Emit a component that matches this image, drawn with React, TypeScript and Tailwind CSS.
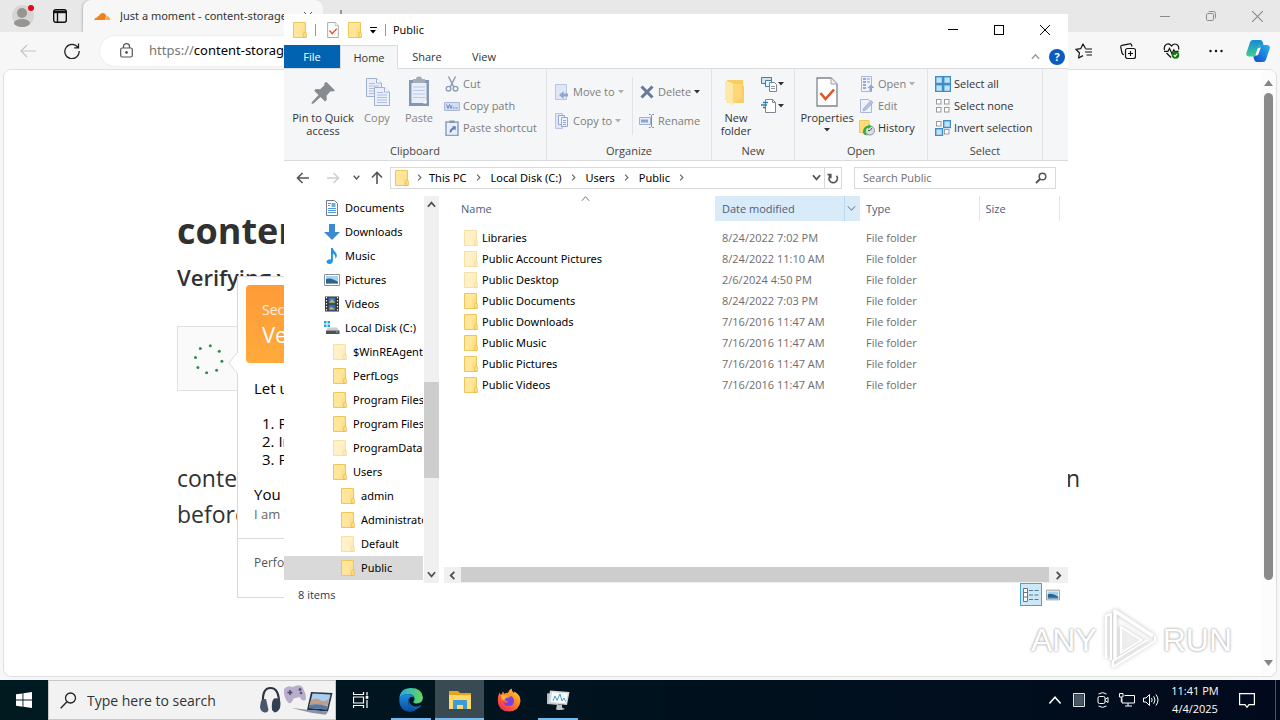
import React from "react";
import type { ReactNode } from "react";

type IconProps = { className?: string };

/* ---------- shared glyphs ---------- */

function Folder({ pale = false, className = "h-4 w-[14px]" }: { pale?: boolean; className?: string }) {
  return (
    <svg viewBox="0 0 14 16" className={`shrink-0 ${className}`} opacity={pale ? 0.55 : 1} aria-hidden="true">
      <path d="M.5.500h12v15H.5z" fill="#ffe08a" stroke="#eec75c" />
      <path d="M1 1h10v3L8 7v8H1z" fill="#ffe9a6" opacity=".6" />
      <path d="M10.800 15.500v-4.200q0-1.300 1.200-1.300t1.300 1.300v4.200z" fill="#ffe38f" stroke="#e9b83d" strokeWidth=".8" />
    </svg>
  );
}

function Chevron({ dir, className = "size-2", width = 2 }: { dir: "up" | "down" | "left" | "right"; className?: string; width?: number }) {
  const d = {
    up: "M1 7.500 5 3l4 4.500",
    down: "M1 2.500 5 7l4-4.500",
    left: "M7 1 3 5l4 4",
    right: "M3 1l4 4-4 4",
  }[dir];
  return (
    <svg viewBox="0 0 10 10" className={`shrink-0 ${className}`} fill="none" stroke="currentColor" strokeWidth={width} aria-hidden="true">
      <path d={d} />
    </svg>
  );
}

function Caret({ className = "" }: IconProps) {
  return (
    <svg viewBox="0 0 6 4" className={`h-1 w-1.5 shrink-0 ${className}`} aria-hidden="true">
      <path d="M0 0h6L3 3.500z" fill="currentColor" />
    </svg>
  );
}

function CheckPage({ className = "" }: IconProps) {
  return (
    <svg viewBox="0 0 22 30" className={`shrink-0 ${className}`} aria-hidden="true">
      <path d="M1 1h14l6 6v22H1z" fill="#fff" stroke="#7d8590" strokeWidth="1.300" />
      <path d="M15 1v6h6" fill="#eef0f3" stroke="#9aa2ad" />
      <path d="m4.500 16 5 6L18 12.500" fill="none" stroke="#e0562b" strokeWidth="2.600" />
    </svg>
  );
}

/* ---------- ribbon icons ---------- */

const PinIcon = () => (
  <svg viewBox="0 0 32 32" className="size-8" aria-hidden="true">
    <path d="M21.500 6 30 14.500l-2 1-2.500-.3-4 4.500.3 4.300-1.800 1.500-4.500-4.500-7 6.500-2 .5.500-2 6.500-7-4.300-4.300 1.600-1.800 4.400.3 4.300-4.200-.2-2z" transform="translate(-2 0)" fill="#848c92" />
  </svg>
);

const CopyIcon = () => (
  <svg viewBox="0 0 32 32" className="size-8" aria-hidden="true">
    {[
      [5, 2],
      [13, 11],
    ].map(([x, y]) => (
      <g key={x} transform={`translate(${x} ${y})`}>
        <path d="M.5.500h10l5 4.500v13.500H.5z" fill="#eaf0fb" stroke="#9fb0d2" />
        <path d="M10.500.5V5h5" fill="#fff" stroke="#9fb0d2" />
        <path d="M3 5.500h6M3 8h10M3 10.500h10M3 13h10M3 15.500h10" stroke="#aebde0" />
      </g>
    ))}
  </svg>
);

const PasteIcon = () => (
  <svg viewBox="0 0 32 32" className="size-8" aria-hidden="true">
    <path d="M6 4h20v26H6z" fill="#8496b5" />
    <path d="M8.500 7h15v20h-15z" fill="#e9effa" />
    <path d="M10 11h12M10 14.500h12M10 18h12M10 21.500h12" stroke="#b9c8e6" />
    <path d="M10 3h3q0-2.500 3-2.500T19 3h3v4H10z" fill="#a3acb8" />
    <path d="M20 27.500 23.500 24v3.500z" fill="#fff" />
  </svg>
);

const CutIcon = () => (
  <svg viewBox="0 0 16 16" className="size-4" fill="none" stroke="#8d9db6" aria-hidden="true">
    <path d="M4.500.5 9.800 11M11.500.5 6.200 11" strokeWidth="1.500" />
    <circle cx="4.500" cy="12.700" r="2.300" strokeWidth="1.400" />
    <circle cx="11.500" cy="12.700" r="2.300" strokeWidth="1.400" />
  </svg>
);

const CopyPathIcon = () => (
  <svg viewBox="0 0 16 16" className="size-4" aria-hidden="true">
    <path d="M.5 4.500h15v8H.5z" fill="#d2dcf2" stroke="#a9b8d8" />
    <path d="m2.500 6.500 1.500 4 1.500-4 1.500 4 1-3M9 10h1.500M11.500 10h2" fill="none" stroke="#6f87ba" />
  </svg>
);

const PasteShortcutIcon = () => (
  <svg viewBox="0 0 16 16" className="size-4" aria-hidden="true">
    <path d="M2 2h12v13.500H2z" fill="#e8effa" stroke="#8b9fc4" strokeWidth="1.500" />
    <path d="M5.500.5h5V3h-5z" fill="#8795aa" />
    <path d="M5.500 12.500q0-4 3-4.500V6l3.500.5-.5 4-1.200-1.200q-2.500.5-3 3.200z" fill="#5f7fbd" />
  </svg>
);

const MoveIcon = () => (
  <svg viewBox="0 0 16 16" className="size-4" aria-hidden="true">
    <path d="M1.500.500h11v15h-11z" fill="#dfe6f6" stroke="#b7c4e2" />
    <path d="M14 9.500v3H9.500V15L5 11l4.500-4v2.500z" fill="#92a6cf" />
  </svg>
);

const CopyToIcon = () => (
  <svg viewBox="0 0 16 16" className="size-4" aria-hidden="true">
    <path d="M1.500.500h7v15h-7z" fill="#dfe6f6" stroke="#b7c4e2" />
    <path d="M4.500 2.500h6v9h-6z" fill="#eef3fc" stroke="#94a7cf" />
    <path d="M7.500 4.500h6v9h-6z" fill="#eef3fc" stroke="#94a7cf" />
    <path d="M9 7.500h3M9 9.500h3M9 11.500h3" stroke="#94a7cf" />
  </svg>
);

const DeleteIcon = () => (
  <svg viewBox="0 0 16 16" className="size-4" aria-hidden="true">
    <path d="M2.500 2.500 13.500 13.500M13.500 2.500 2.500 13.500" stroke="#66799b" strokeWidth="3" fill="none" />
  </svg>
);

const RenameIcon = () => (
  <svg viewBox="0 0 16 16" className="size-4" fill="none" aria-hidden="true">
    <path d="M.5 4.500h11v7H.5z" fill="#e6edfa" stroke="#9fb1d6" />
    <path d="M2 6.500h7v3H2z" fill="#8ba3d4" />
    <path d="M10 1.500h1.500l1 1 1-1H15M12.500 2.500v11M10 14.500h1.500l1-1 1 1H15" stroke="#7f8da5" />
  </svg>
);

const BigFolderIcon = () => (
  <svg viewBox="0 0 32 32" className="size-8" aria-hidden="true">
    <path d="M7 4h16v5l1 1v17H7z" fill="#f8ce63" />
    <path d="M5 4.500l8 3V30l-8-6z" fill="#ffe9a8" />
    <path d="M13 8h9v14l-9 6z" fill="#ffdc80" opacity=".7" />
  </svg>
);

const NewItemIcon = () => (
  <svg viewBox="0 0 16 16" className="size-4" aria-hidden="true">
    <path d="M.5 1.500h10v6H.5z" fill="#cfe5f3" stroke="#3f7fa3" />
    <path d="M4.500 4.500h6v6h-6z" fill="#e9f3fa" stroke="#3f7fa3" />
    <path d="M8.500 6.500h5l2 2v7h-7z" fill="#fff" stroke="#7c8792" />
    <path d="M10 10.500h4M10 12.500h4" stroke="#8f99a3" />
  </svg>
);

const EasyAccessIcon = () => (
  <svg viewBox="0 0 16 16" className="size-4" aria-hidden="true">
    <path d="M4.500 1.500h7l3 3v10h-10z" fill="#fff" stroke="#7c8792" />
    <path d="M11.500 1.500v3h3" fill="none" stroke="#7c8792" />
    <path d="M2 4.500h5M0 7h6M2 9.500h3" stroke="#2f7fb5" strokeWidth="1.300" />
  </svg>
);

const OpenIcon = () => (
  <svg viewBox="0 0 16 16" className="size-4" aria-hidden="true">
    <path d="M2.500.500h10v15h-10z" fill="#eef2fb" stroke="#a9b8d8" />
    <path d="M4 3h3M4 6h3M4 9h3M4 12h3" stroke="#7f93bd" strokeWidth="1.600" />
    <path d="M8 3h3M8 6h3" stroke="#a9b8d8" strokeWidth="1.400" />
    <path d="M12 8.500 15.500 12H13v3.500h-2.500V12H8.500z" fill="#93a5cc" />
  </svg>
);

const EditIcon = () => (
  <svg viewBox="0 0 16 16" className="size-4" aria-hidden="true">
    <path d="M1.500 1.500h8l3 3v10h-11z" fill="#eef2fb" stroke="#a9b8d8" />
    <path d="m4 13 .8-3L12 2.500l2 2L6.800 12z" fill="#b5c3e0" stroke="#93a5cc" strokeWidth=".7" />
  </svg>
);

const HistoryIcon = () => (
  <svg viewBox="0 0 16 16" className="size-4" aria-hidden="true">
    <path d="M.5.500h9.500v12H.5z" fill="#ffdd77" stroke="#eec75c" />
    <circle cx="11" cy="10.500" r="4.500" fill="#d9dee2" stroke="#8f979e" />
    <path d="M11 10.500 13 8M11 10.500H9" stroke="#555" />
    <path d="M4 12q0-6 6-6.500l-.5-1.500 3 2.500-3.500 2.500v-1.500Q6 8.500 6.500 13q1 1.500 3 2Q4.500 16 4 12z" fill="#37a845" />
  </svg>
);

function SelectIcon({ filled }: { filled: boolean[] }) {
  return (
    <svg viewBox="0 0 16 16" className="size-4" aria-hidden="true">
      {filled.map((on, i) => {
        const x = (i % 2) * 8;
        const y = Math.floor(i / 2) * 8;
        return on ? (
          <rect key={i} x={x + 0.7} y={y + 0.7} width="6.800" height="6.800" fill="#bfe0f8" stroke="#3c8ec9" strokeWidth="1.400" />
        ) : (
          <rect key={i} x={x + 1.5} y={y + 1.5} width="4.500" height="4.500" fill="#fff" stroke="#9a9a9a" />
        );
      })}
    </svg>
  );
}

/* ---------- ribbon parts ---------- */

function Group({ label, className, children }: { label: string; className: string; children: ReactNode }) {
  return (
    <section className={`flex shrink-0 flex-col border-r border-[#e2e3e4] ${className}`}>
      <div className="flex h-[73px]">{children}</div>
      <h2 className="text-center leading-[18px] text-[#444]">{label}</h2>
    </section>
  );
}

function BigButton({ icon, label, dim, className, children }: { icon: ReactNode; label: string; dim?: boolean; className: string; children?: ReactNode }) {
  return (
    <button className={`flex shrink-0 flex-col items-center pt-[7px] ${dim ? "text-[#858585]" : "text-[#333]"} ${className}`}>
      {icon}
      <span className="mt-[3px] leading-[13px]">{label}</span>
      {children}
    </button>
  );
}

function SmallButton({ icon, label, dim, tall, caret }: { icon: ReactNode; label: string; dim?: boolean; tall?: boolean; caret?: "dim" | "dark" }) {
  return (
    <button className={`flex items-center gap-[3px] whitespace-nowrap ${tall ? "h-[29px]" : "h-[22px]"} ${dim ? "text-[#7d7d7d]" : "text-[#333]"}`}>
      {icon}
      <span>{label}</span>
      {caret && <Caret className={caret === "dim" ? "text-[#b0b0b0]" : "text-[#333]"} />}
    </button>
  );
}

function Ribbon() {
  return (
    <div className="flex h-[92px] border-b border-[#dadbdc] bg-[#f5f6f7]">
      <Group label="Clipboard" className="w-[263px]">
        <BigButton icon={<PinIcon />} label="Pin to Quick access" className="ml-1 w-[70px]" />
        <BigButton icon={<CopyIcon />} label="Copy" dim className="w-[38px]" />
        <BigButton icon={<PasteIcon />} label="Paste" dim className="w-[46px]" />
        <div className="ml-0.5 flex flex-col pt-1">
          <SmallButton icon={<CutIcon />} label="Cut" dim />
          <SmallButton icon={<CopyPathIcon />} label="Copy path" dim />
          <SmallButton icon={<PasteShortcutIcon />} label="Paste shortcut" dim />
        </div>
      </Group>
      <Group label="Organize" className="w-[165px]">
        <div className="mt-2 ml-[7px] flex h-[58px] w-[79px] flex-col border-r border-[#e2e3e4]">
          <SmallButton icon={<MoveIcon />} label="Move to" dim tall caret="dim" />
          <SmallButton icon={<CopyToIcon />} label="Copy to" dim tall caret="dim" />
        </div>
        <div className="mt-2 ml-1.5 flex flex-col">
          <SmallButton icon={<DeleteIcon />} label="Delete" dim tall caret="dark" />
          <SmallButton icon={<RenameIcon />} label="Rename" dim tall />
        </div>
      </Group>
      <Group label="New" className="w-[83px]">
        <BigButton icon={<BigFolderIcon />} label="New folder" className="w-12" />
        <div className="ml-px flex flex-col pt-1">
          <button aria-label="New item" className="flex h-[22px] items-center gap-px text-[#333]"><NewItemIcon /><Caret /></button>
          <button aria-label="Easy access" className="flex h-[22px] items-center gap-px text-[#333]"><EasyAccessIcon /><Caret /></button>
        </div>
      </Group>
      <Group label="Open" className="w-[133px]">
        <BigButton icon={<CheckPage className="h-8 w-[22px]" />} label="Properties" className="w-16">
          <Caret className="mt-1 text-[#333]" />
        </BigButton>
        <div className="flex flex-col pt-1">
          <SmallButton icon={<OpenIcon />} label="Open" dim caret="dim" />
          <SmallButton icon={<EditIcon />} label="Edit" dim />
          <SmallButton icon={<HistoryIcon />} label="History" />
        </div>
      </Group>
      <Group label="Select" className="w-[115px]">
        <div className="ml-[7px] flex flex-col pt-1">
          <SmallButton icon={<SelectIcon filled={[true, true, true, true]} />} label="Select all" />
          <SmallButton icon={<SelectIcon filled={[false, false, false, false]} />} label="Select none" />
          <SmallButton icon={<SelectIcon filled={[false, true, true, false]} />} label="Invert selection" />
        </div>
      </Group>
    </div>
  );
}

/* ---------- navigation tree ---------- */

const DocumentsIcon = () => (
  <svg viewBox="0 0 16 16" className="size-4" aria-hidden="true">
    <path d="M2.500.500h8l3 3v12h-11z" fill="#fff" stroke="#6e7b88" />
    <path d="M4 3.500h3M4 5.500h2M4 8.500h8M4 10.500h8M4 12.500h8" stroke="#4d9ad6" />
    <path d="M7.500 3h4v4h-4z" fill="#69afe0" />
  </svg>
);
const DownloadsIcon = () => (
  <svg viewBox="0 0 16 16" className="size-4" aria-hidden="true">
    <path d="M5 0h6v8h5l-8 8-8-8h5z" fill="#3b8bd4" />
  </svg>
);
const MusicIcon = () => (
  <svg viewBox="0 0 16 16" className="size-4" aria-hidden="true">
    <path d="M7 0h1.800q.4 2.500 2.400 4t1.500 4.500q-.4 1.500-1.500 2 .7-3.500-2.300-5v7.300q-.2 2.900-3.400 3.200-3-.2-3-2.200.3-2.700 4.500-2.600z" fill="#1e95e6" />
  </svg>
);
const PicturesIcon = ({ className = "h-4 w-4" }: IconProps) => (
  <svg viewBox="0 0 16 16" className={className} aria-hidden="true">
    <path d="M.5 2.500h15v11H.5z" fill="#fff" stroke="#8a9299" />
    <path d="M2 4h12v8H2z" fill="#a6d2f0" />
    <path d="M2 7q5-2 12 3v2H2z" fill="#2f6288" />
    <path d="M2 11h12v1H2z" fill="#6fa6bb" />
  </svg>
);
const VideosIcon = () => (
  <svg viewBox="0 0 16 16" className="size-4" aria-hidden="true">
    <path d="M1 .5h14v15H1z" fill="#2d2f33" />
    <path d="M2.500 1v15M13.500 1v15" stroke="#e8e8e8" strokeWidth="1.300" strokeDasharray="1.500 1.500" />
    <path d="M4.500 1.500h7v6h-7z" fill="#3977b8" />
    <path d="M4.500 8.500h7v6h-7z" fill="#3d6da6" />
    <path d="M5 6.500 8 3l3 4zM5 13.500l2-3 4 3z" fill="#c8b34e" />
  </svg>
);
const DiskIcon = () => (
  <svg viewBox="0 0 16 16" className="size-4" aria-hidden="true">
    <path d="M0 1h2.500v2.500H0zM3.500 1H6v2.500H3.500zM0 4.500h2.500V7H0zM3.500 4.500H6V7H3.500z" fill="#1fa5e2" />
    <path d="M4 7.500h9l2 3H2.500z" fill="#c9ced2" />
    <path d="M2 10.500h13.500V14H2z" fill="#4e5357" />
    <path d="M12 12h2" stroke="#5bd36a" />
  </svg>
);

const tree: { name: string; icon: ReactNode; level: 0 | 1 | 2 }[] = [
  { name: "Documents", icon: <DocumentsIcon />, level: 0 },
  { name: "Downloads", icon: <DownloadsIcon />, level: 0 },
  { name: "Music", icon: <MusicIcon />, level: 0 },
  { name: "Pictures", icon: <PicturesIcon />, level: 0 },
  { name: "Videos", icon: <VideosIcon />, level: 0 },
  { name: "Local Disk (C:)", icon: <DiskIcon />, level: 0 },
  { name: "$WinREAgent", icon: <Folder pale />, level: 1 },
  { name: "PerfLogs", icon: <Folder />, level: 1 },
  { name: "Program Files", icon: <Folder />, level: 1 },
  { name: "Program Files (x86)", icon: <Folder />, level: 1 },
  { name: "ProgramData", icon: <Folder pale />, level: 1 },
  { name: "Users", icon: <Folder />, level: 1 },
  { name: "admin", icon: <Folder />, level: 2 },
  { name: "Administrator", icon: <Folder />, level: 2 },
  { name: "Default", icon: <Folder pale />, level: 2 },
  { name: "Public", icon: <Folder />, level: 2 },
];

const indent = { 0: "pl-10", 1: "pl-12", 2: "pl-14" };

function NavigationPane() {
  return (
    <nav aria-label="Folders" className="flex w-[156px] shrink-0">
      <ul className="w-[139px] overflow-hidden font-['Noto_Sans','Open_Sans',sans-serif]">
        {tree.map((item) => (
          <li key={item.name}>
            <a href="#" className={`flex h-6 items-center gap-[5px] whitespace-nowrap text-black ${indent[item.level]} ${item.name === "Public" ? "bg-[#d9d9d9]" : ""}`}>
              <span className="flex w-4 shrink-0 justify-center">{item.icon}</span>
              {item.name}
            </a>
          </li>
        ))}
      </ul>
      <div className="ml-px flex w-[15px] flex-col bg-[#f0f0f0] text-[#505050]">
        <button aria-label="Scroll up" className="flex h-[17px] items-center justify-center"><Chevron dir="up" className="size-[9px]" /></button>
        <div className="mt-[169px] h-24 bg-[#cdcdcd]" />
        <button aria-label="Scroll down" className="mt-auto flex h-[17px] items-center justify-center"><Chevron dir="down" className="size-[9px]" /></button>
      </div>
    </nav>
  );
}

/* ---------- file list ---------- */

const files = [
  { name: "Libraries", date: "8/24/2022 7:02 PM", pale: true },
  { name: "Public Account Pictures", date: "8/24/2022 11:10 AM", pale: true },
  { name: "Public Desktop", date: "2/6/2024 4:50 PM", pale: true },
  { name: "Public Documents", date: "8/24/2022 7:03 PM", pale: false },
  { name: "Public Downloads", date: "7/16/2016 11:47 AM", pale: false },
  { name: "Public Music", date: "7/16/2016 11:47 AM", pale: false },
  { name: "Public Pictures", date: "7/16/2016 11:47 AM", pale: false },
  { name: "Public Videos", date: "7/16/2016 11:47 AM", pale: false },
];

function FileList() {
  return (
    <div className="ml-1 flex min-w-0 flex-1 flex-col">
      <table className="ml-[11px] w-[604px] table-fixed border-collapse text-left">
        <colgroup>
          <col className="w-[260px]" />
          <col className="w-[145px]" />
          <col className="w-[119px]" />
          <col className="w-20" />
        </colgroup>
        <thead className="text-[#4c607a]">
          <tr className="h-[25px]">
            <th className="relative p-0 pl-1.5 font-normal">
              Name
              <Chevron dir="up" width={1} className="absolute -top-0.5 left-[126px] size-[9px] text-[#666]" />
            </th>
            <th className="bg-[#d9ebf9] p-0 font-normal">
              <div className="flex h-[25px] items-center pl-[7px]">
                <span className="flex-1">Date modified</span>
                <button aria-label="Filter dates" className="flex h-full w-4 items-center justify-center border-l border-[#b9d9ee] pr-0.5">
                  <Chevron dir="down" width={1} className="size-[9px]" />
                </button>
              </div>
            </th>
            <th className="border-r border-[#e5e5e5] p-0 pl-1.5 font-normal">Type</th>
            <th className="border-r border-[#e5e5e5] p-0 pl-1.5 font-normal">Size</th>
          </tr>
        </thead>
        <tbody className="text-[#6d6d6d] before:block before:h-1.5">
          {files.map((f) => (
            <tr key={f.name} className="h-[21px]">
              <td className="p-0">
                <div className="flex h-[21px] items-center gap-1 pl-[9px] font-['Noto_Sans','Open_Sans',sans-serif] text-black">
                  <Folder pale={f.pale} />
                  {f.name}
                </div>
              </td>
              <td className="p-0 pl-[7px]">{f.date}</td>
              <td className="p-0 pl-1.5">File folder</td>
              <td className="p-0" />
            </tr>
          ))}
        </tbody>
      </table>
      <div className="mt-auto flex h-4 bg-[#f0f0f0] text-[#505050]">
        <button aria-label="Scroll left" className="flex w-[17px] items-center justify-center"><Chevron dir="left" className="size-[9px]" /></button>
        <div className="mb-px flex-1 bg-[#cdcdcd]" />
        <button aria-label="Scroll right" className="flex w-[19px] items-center justify-center"><Chevron dir="right" className="size-[9px]" /></button>
      </div>
    </div>
  );
}

/* ---------- explorer window ---------- */

function ArrowIcon({ turn = "" }: { turn?: string }) {
  return (
    <svg viewBox="0 0 14 14" className={`size-[14px] ${turn}`} fill="none" stroke="currentColor" strokeWidth="1.600" aria-hidden="true">
      <path d="M1.500 7H13M6.500 2l-5 5 5 5" />
    </svg>
  );
}

function ExplorerWindow() {
  const crumbs = ["This PC", "Local Disk (C:)", "Users", "Public"];
  return (
    <section aria-label="Public" className="absolute top-[14px] left-[284px] flex w-[784px] flex-col bg-white text-[11px] leading-4">
      <header className="flex h-[31px] items-center">
        <Folder className="ml-[9px] h-4 w-[14px]" />
        <span className="ml-2 h-3 w-px bg-[#999]" />
        <CheckPage className="ml-[11px] h-4 w-3" />
        <Folder className="ml-[9px] h-4 w-[14px]" />
        <button aria-label="Customize" className="ml-[7px] flex w-2 flex-col items-center gap-0.5 pt-0.5">
          <span className="h-px w-[7px] bg-black" />
          <Caret />
        </button>
        <span className="ml-2 h-3 w-px bg-[#999]" />
        <span className="ml-[7px] text-black">Public</span>
        <div className="ml-auto flex h-full">
          <button aria-label="Minimize" className="flex w-[46px] items-center justify-center"><span className="h-px w-[10px] bg-black" /></button>
          <button aria-label="Maximize" className="flex w-[45px] items-center justify-center"><span className="size-[10px] border border-black" /></button>
          <button aria-label="Close" className="flex w-[47px] items-center justify-center">
            <svg viewBox="0 0 10 10" className="size-[10px]" stroke="#000" aria-hidden="true"><path d="m0 0 10 10M10 0 0 10" /></svg>
          </button>
        </div>
      </header>
      <div className="flex h-6 border-b border-[#dadbdc] text-[#333]">
        <button className="w-14 bg-[#0063b1] text-white">File</button>
        <button className="-mb-px w-[58px] border border-b-0 border-[#dadbdc] bg-[#f5f6f7]">Home</button>
        <button className="w-[58px]">Share</button>
        <button className="w-14">View</button>
        <div className="ml-auto flex items-center gap-[9px] pr-[3px]">
          <Chevron dir="up" width={1.5} className="size-[9px] text-[#999]" />
          <button aria-label="Help" className="flex size-4 items-center justify-center rounded-full bg-[#0a5cc0] font-bold text-white">?</button>
        </div>
      </div>
      <Ribbon />
      <div className="mb-0.5 flex h-[33px] items-center pr-3 text-[#555]">
        <button aria-label="Back" className="ml-3 w-[14px]"><ArrowIcon /></button>
        <button aria-label="Forward" className="ml-4 w-[14px] text-[#d0d0d0]"><ArrowIcon turn="rotate-180" /></button>
        <button aria-label="Recent locations" className="ml-[13px] w-2"><Chevron dir="down" className="size-[7px]" /></button>
        <button aria-label="Up" className="ml-[9px] w-[14px]"><ArrowIcon turn="rotate-90" /></button>
        <div className="ml-1.5 flex h-[22px] flex-1 items-center border border-[#d9d9d9] pl-1 font-['Noto_Sans','Open_Sans',sans-serif] text-black">
          <Folder />
          {crumbs.map((c, i) => (
            <React.Fragment key={c}>
              <span className={`flex justify-center text-[#666] ${i === 0 ? "w-5" : "w-6"}`}><Chevron dir="right" width={1.6} className="size-[7px]" /></span>
              <a href="#">{c}</a>
            </React.Fragment>
          ))}
          <span className="flex w-6 justify-center text-[#666]"><Chevron dir="right" width={1.6} className="size-[7px]" /></span>
          <button aria-label="Previous locations" className="ml-auto flex w-4 justify-center text-[#555]"><Chevron dir="down" className="size-[9px]" /></button>
          <button aria-label="Refresh" className="flex h-full w-[17px] items-center justify-center border-l border-[#d9d9d9] text-[#555]">
            <svg viewBox="0 0 12 12" className="size-3" fill="none" stroke="currentColor" strokeWidth="1.600" aria-hidden="true">
              <path d="M8.500 2.600A4.200 4.200 0 1 1 3 3.500M8.700 6V2.300h3.300" transform="matrix(-1 0 0 1 12.500 .3)" />
            </svg>
          </button>
        </div>
        <div className="ml-3 flex h-[22px] w-[202px] items-center border border-[#d9d9d9] pr-2">
          <input aria-label="Search Public" placeholder="Search Public" className="min-w-0 flex-1 pl-2 outline-none placeholder:text-[#6d6d6d]" />
          <svg viewBox="0 0 12 12" className="size-3" fill="none" stroke="#555" strokeWidth="1.500" aria-hidden="true">
            <circle cx="7.500" cy="4.500" r="3.300" />
            <path d="M5 7 1 11" strokeWidth="2" />
          </svg>
        </div>
      </div>
      <div className="flex h-[387px]">
        <NavigationPane />
        <FileList />
      </div>
      <footer className="flex h-[23px] items-center pr-2 pl-[14px] text-[#1e395b]">
        <span>8 items</span>
        <button aria-label="Details view" className="ml-auto flex h-[23px] w-[22px] items-center justify-center border border-[#4aa3cc] bg-[#cce8f7]">
          <svg viewBox="0 0 16 14" className="h-[14px] w-4" fill="none" stroke="#7b6f78" aria-hidden="true">
            <path d="M.5.500h4v13h-4zM.5 4.500h4M.5 9h4" fill="#fff" />
            <path d="M6 2.500h4M11.500 2.500h4M6 7h4M11.500 7h4M6 11.500h4M11.500 11.500h4" stroke="#587a8a" />
          </svg>
        </button>
        <button aria-label="Thumbnail view" className="ml-1"><PicturesIcon className="size-[14px]" /></button>
      </footer>
    </section>
  );
}

/* ---------- browser ---------- */

function BrowserChrome() {
  return (
    <>
      <header className="flex h-8 shrink-0 items-stretch overflow-hidden bg-[#e8e8e8]">
        <button aria-label="Profile" className="relative ml-[11px] w-6">
          <svg viewBox="0 0 24 24" className="size-6" aria-hidden="true">
            <circle cx="12" cy="12" r="11" fill="#d6d5d4" />
            <circle cx="11" cy="9" r="5" fill="#979593" />
            <ellipse cx="11" cy="19" rx="8" ry="4" fill="#979593" />
          </svg>
          <span className="absolute top-[5px] right-[1px] size-1.5 rounded-full bg-[#e00b1c]" />
        </button>
        <button aria-label="Tab actions" className="ml-[18px] flex w-[14px] items-center">
          <svg viewBox="0 0 14 14" className="size-[14px]" fill="none" stroke="#111" strokeWidth="1.400" aria-hidden="true">
            <rect x=".7" y=".7" width="12.600" height="12.600" rx="2" />
            <path d="M1 3h12" strokeWidth="2.400" />
            <path d="M4.500 4v9" />
          </svg>
        </button>
        <div className="ml-4 flex w-60 items-center rounded-t-lg bg-[#f7f7f7] pl-[11px] shadow-[-1px_0_2px_#bbb]">
          <svg viewBox="0 0 18 10" className="h-[9px] w-[17px] shrink-0" aria-hidden="true">
            <path d="M0 9q0-3 3-3 .5-1.500 2-1.500Q6.500 1 9.500 1q3 .2 3.500 3.500L12 9z" fill="#f38020" />
            <path d="m12.500 9 1-4.500Q17 4.500 17.500 9z" fill="#faae40" />
          </svg>
          <span className="ml-[9px] w-[168px] overflow-hidden font-['Noto_Sans','Open_Sans',sans-serif] text-[11px] whitespace-nowrap text-[#333]">Just a moment - content-storage</span>
          <button aria-label="Close tab" className="ml-4">
            <svg viewBox="0 0 8 8" className="size-2" stroke="#555" aria-hidden="true"><path d="m0 0 8 8M8 0 0 8" /></svg>
          </button>
        </div>
        <button aria-label="New tab" className="ml-3">
          <svg viewBox="0 0 12 12" className="size-3" stroke="#444" aria-hidden="true"><path d="M6 0v12M0 6h12" /></svg>
        </button>
        <div className="ml-auto flex text-[#8a8a8a]">
          <button aria-label="Minimize browser" className="flex w-[46px] items-center justify-center"><span className="h-px w-[10px] bg-current" /></button>
          <button aria-label="Restore browser" className="flex w-[46px] items-center justify-center">
            <svg viewBox="0 0 10 10" className="size-[10px]" fill="none" stroke="currentColor" aria-hidden="true">
              <rect x=".5" y="2.500" width="7" height="7" rx="1.200" />
              <path d="M2.500.8Q3 .5 3.500.5h4q2 0 2 2v4q0 .7-.4 1" />
            </svg>
          </button>
          <button aria-label="Close browser" className="flex w-[46px] items-center justify-center">
            <svg viewBox="0 0 10 10" className="size-[11px]" stroke="currentColor" aria-hidden="true"><path d="m0 0 10 10M10 0 0 10" /></svg>
          </button>
        </div>
      </header>
      <div className="flex h-[37px] shrink-0 items-center bg-[#f7f7f7]">
        <button aria-label="Browser back" className="ml-5 text-[#c4c4c4]">
          <svg viewBox="0 0 16 14" className="h-[14px] w-4" fill="none" stroke="currentColor" strokeWidth="1.200" aria-hidden="true"><path d="M1 7h15M7 1 1 7l6 6" /></svg>
        </button>
        <button aria-label="Reload" className="ml-7 text-[#222]">
          <svg viewBox="0 0 16 16" className="size-4" fill="none" stroke="currentColor" strokeWidth="1.300" aria-hidden="true"><path d="M14 4.500A7.200 7.200 0 1 0 15.200 8M14.500.5v4.300h-4.300" /></svg>
        </button>
        <div className="ml-5 flex h-[30px] flex-1 items-center rounded-full bg-white pl-5 shadow-[0_0_2px_#ddd]">
          <svg viewBox="0 0 13 15" className="h-[15px] w-[13px]" fill="none" stroke="#555" strokeWidth="1.200" aria-hidden="true">
            <rect x=".7" y="5" width="11.600" height="9" rx="1.500" />
            <path d="M3.500 5V3.500Q3.500.7 6.500.7t3 2.800V5" />
            <circle cx="6.500" cy="9.500" r=".8" fill="#555" />
          </svg>
          <a href="#" className="ml-4 font-['Noto_Sans','Open_Sans',sans-serif] text-[13px] text-black"><span className="text-[#767676]">https://</span>content-storage</a>
        </div>
        <button aria-label="Favorites" className="flex w-11 justify-center">
          <svg viewBox="0 0 18 16" className="h-4 w-[18px]" fill="none" stroke="#111" strokeWidth="1.200" strokeLinejoin="round" aria-hidden="true">
            <path d="M10.500 5.500 8 1 5.800 5.600.8 6.300l3.600 3.500-.8 5.200 4.400-2.400M10.500 6h6.500M10 9h7M11.500 12H17" />
          </svg>
        </button>
        <button aria-label="Collections" className="flex w-11 justify-center">
          <svg viewBox="0 0 16 16" className="size-4" fill="none" stroke="#111" strokeWidth="1.200" aria-hidden="true">
            <rect x="5.500" y="5.500" width="10" height="10" rx="2" fill="#f7f7f7" />
            <path d="M10.500 8v5M8 10.500h5M12 3.500l-.5-1.500Q11 .4 9.500.8L2 2.300Q.4 2.800.8 4.300L2 10q.5 1.500 1.800 1.700" />
          </svg>
        </button>
        <button aria-label="Browser essentials" className="flex w-11 justify-center">
          <svg viewBox="0 0 18 16" className="h-4 w-[18px]" fill="none" stroke="#111" strokeWidth="1.200" aria-hidden="true">
            <path d="M1.500 7Q.5 3 3.500 1.300 6.500 0 8.500 3q2.500-3 5.300-1.500Q16.500 3.200 15.500 6.500M1 8.300h4l1.500-3 2.500 5.500 1.800-4 .8 1.500h4M3.500 10l4.500 4.500" />
            <circle cx="12.500" cy="12" r="3.800" fill="#107c10" stroke="none" />
            <path d="m10.800 12.200 1.200 1.200 2.200-2.600" stroke="#fff" />
          </svg>
        </button>
        <button aria-label="Settings and more" className="flex w-11 justify-center">
          <svg viewBox="0 0 14 4" className="h-1 w-[14px]" fill="#111" aria-hidden="true"><circle cx="1.500" cy="2" r="1.200" /><circle cx="7" cy="2" r="1.200" /><circle cx="12.500" cy="2" r="1.200" /></svg>
        </button>
        <button aria-label="Copilot" className="flex w-[42px] justify-center pr-0.5">
          <svg viewBox="0 0 24 24" className="size-6" aria-hidden="true">
            <defs>
              <linearGradient id="cpA" x1="0" y1="0" x2="0" y2="1"><stop offset="0" stopColor="#1489d8" /><stop offset="1" stopColor="#3fd08e" /></linearGradient>
              <linearGradient id="cpB" x1="1" y1="0" x2="0" y2="1"><stop offset="0" stopColor="#26b5ee" /><stop offset="1" stopColor="#1546c8" /></linearGradient>
            </defs>
            <path d="M7 1h7q2 0 2.700 2l.8 3h-3q-1.500 0-2 1.500L9.500 16q-.6 1.500-2.200 1.500H2.500Q-.4 17.500.4 14L4 3.300Q4.700 1 7 1z" fill="url(#cpA)" />
            <path d="M14.500 6h7q3 .2 2.200 3.500L20 20.500q-.8 2.500-3 2.500h-6q-2 0-2.600-2l-1.200-3.500q1.800 0 2.300-1.500l3-8.500Q13 6 14.500 6z" fill="url(#cpB)" />
            <path d="M11.500 10q.5-1.500 2-1.500h1.300L12.500 15q-.5 1.500-2 1.500H9.200z" fill="#f7f7f7" />
          </svg>
        </button>
      </div>
    </>
  );
}

const spinnerDots = [
  [15.7, 1.3], [24.7, 6.7], [27.3, 16.7], [22, 25.7], [12, 28.3], [3.3, 23], [0.9, 13], [5.7, 4],
];

function HelpPopup() {
  return (
    <aside className="absolute -top-[51px] left-[59px] w-[340px] border border-[#d9d9d9] bg-white text-black">
      <svg viewBox="0 0 10 24" className="absolute top-[74px] -left-[10px] h-6 w-[10px]" aria-hidden="true">
        <path d="M10.500 0 1 12l9.500 12" fill="#fff" stroke="#dcdcdc" />
      </svg>
      <div className="mx-2 mt-2 flex h-[78px] flex-col justify-center rounded bg-linear-to-b from-[#ff9b38] to-[#ffaa3c] pl-4 text-white">
        <p className="text-[14px] leading-5 text-white/85">Security check</p>
        <p className="text-[22px] leading-7">Verification</p>
      </div>
      <p className="mt-4 pl-4 text-[15px] leading-[18px]">Let us know</p>
      <ol className="mt-[17px] list-inside list-decimal pl-6 text-[15px] leading-[18px]">
        <li>Press</li>
        <li>In the</li>
        <li>Press</li>
      </ol>
      <div className="mt-4 border-b border-[#d9d9d9] pb-[14px] pl-4">
        <p className="text-[15px] leading-5">You will</p>
        <p className="text-[13px] leading-5 text-[#666]">I am not</p>
      </div>
      <p className="flex h-[58px] items-center pb-2.5 pl-4 text-[12px] text-[#555]">Perform</p>
    </aside>
  );
}

function ChallengePage() {
  return (
    <main className="mx-[3px] mb-[3px] flex min-h-0 flex-1 overflow-hidden rounded-lg border border-[#dfdfdf] bg-white">
      <div className="flex-1 overflow-hidden">
        <div className="mx-auto max-w-[960px] px-6 pt-[131px] text-[#313131]">
          <h1 className="h-[58px] overflow-hidden text-[36px] leading-[60px] font-bold whitespace-nowrap">content-storage</h1>
          <h2 className="text-[22px] leading-9 font-semibold">Verifying you are human.</h2>
          <div className="relative mt-[31px] h-[65px] w-[300px] border border-[#e0e0e0] bg-[#fafafa]">
            <svg viewBox="0 0 30 30" className="mt-[17px] ml-4 size-[30px]" fill="#2f8f4a" aria-hidden="true">
              {spinnerDots.map(([x, y]) => (
                <circle key={x} cx={x + 0.6} cy={y + 0.5} r="1.500" />
              ))}
            </svg>
            <HelpPopup />
          </div>
          <div className="mt-[69px] text-[23px] leading-9">
            <p className="flex w-[903px] justify-between"><span>content-storage</span><span>connection</span></p>
            <p>before proceeding.</p>
          </div>
        </div>
      </div>
      <div className="flex w-[14px] flex-col items-center bg-[#fcfcfc] pr-px text-[#858585]">
        <svg viewBox="0 0 9 6" className="mt-[10px] h-1.5 w-[9px]" aria-hidden="true"><path d="M4.500 0 9 6H0z" fill="currentColor" /></svg>
        <div className="mt-[7px] h-[487px] w-[9px] rounded-full bg-[#8a8a8a]" />
        <svg viewBox="0 0 9 6" className="mt-auto mb-[10px] h-1.5 w-[9px]" aria-hidden="true"><path d="M0 0h9L4.500 6z" fill="currentColor" /></svg>
      </div>
    </main>
  );
}

/* ---------- taskbar ---------- */

const EdgeLogo = () => (
  <svg viewBox="0 0 24 24" className="size-6" aria-hidden="true">
    <defs>
      <linearGradient id="edA" x1="0" y1="0" x2="1" y2="0"><stop offset="0" stopColor="#2aa5e8" /><stop offset="1" stopColor="#63d957" /></linearGradient>
      <linearGradient id="edB" x1="0" y1="0" x2="0" y2="1"><stop offset="0" stopColor="#1b8fdc" /><stop offset="1" stopColor="#0c4a9e" /></linearGradient>
    </defs>
    <path d="M.2 11Q1 0 12 0t12 9.500q-.3 5.500-6 6-4 0-3.600-2 1.300-1 1.100-3Q15 6 9 6 2 6.500.2 11z" fill="url(#edA)" />
    <path d="M.2 12Q1 6 8.500 6q5.500 0 6.800 3.500Q13 8 11 9.500q-4 3.500-.5 8.500 3 3.800 7.500 3-3 3-7 3Q.5 23 .2 12z" fill="url(#edB)" />
    <path d="M10.500 18q-3-5 .5-8.500Q9 14 12.500 17q4.500 3 9.500 0 .7.300-.2 1.300-2 2.300-4.300 2.700-4.500.5-7-3z" fill="#1464b4" />
  </svg>
);

const FilesLogo = () => (
  <svg viewBox="0 0 24 20" className="h-5 w-6" aria-hidden="true">
    <path d="M1 1h9l2 2h11v4H1z" fill="#e8a317" />
    <path d="M1 5h22v14H1z" fill="#ffd869" />
    <path d="M5 19v-8q0-1 1-1h12q1 0 1 1v8h-4v-4H9v4z" fill="#3e9bd8" />
  </svg>
);

const FirefoxLogo = () => (
  <svg viewBox="0 0 24 24" className="size-6" aria-hidden="true">
    <defs>
      <linearGradient id="ffA" x1="1" y1="0" x2=".2" y2="1"><stop offset="0" stopColor="#ffe14a" /><stop offset=".45" stopColor="#ff8a20" /><stop offset="1" stopColor="#f0245f" /></linearGradient>
    </defs>
    <path d="M2.500 4.500 4 7l2-3.500 1.500 2.300Q9 4.500 11 4.700 12 2 14.500.5q0 2.500 2.500 4.500l.5-1.500q6 3.500 6 9.500-1 10-11.500 10.500Q1 23 .7 12.500.7 8 2.500 4.500z" fill="url(#ffA)" />
    <path d="M7 9.500q3-.5 4 1l3-2.500q3.500 2 3 6-.8 4-5 4-5.500 0-5.800-5 1 2.500 3 2 1.500-.5 2-2-2 .3-2.700-1z" fill="#7542e5" />
    <path d="M4 7q1-.5 3 .3L9.500 7 11 8l-1 1.500q-2 .2-1.500 1.500L6 12.500Q4 10 4 7z" fill="#ffb22c" />
  </svg>
);

const MonitorLogo = () => (
  <svg viewBox="0 0 24 22" className="h-[22px] w-6" aria-hidden="true">
    <path d="M1 4.500 12 3v13L1 15z" fill="#b9bec2" />
    <path d="M4 1.500 23.500 3 21 16 2.500 14z" fill="#d6d9db" />
    <path d="M6 3.300 21.800 4.500l-2 9.800-15-1.600z" fill="#fafcfd" />
    <path d="m7 12 2-5 2 4.500L14 5l2 7 2-3 1.500 3.500" fill="none" stroke="#4d9cc4" />
    <path d="M11 15.500h5v3l3 1.500q-4 1.800-9 .500z" fill="#c0c5c9" />
  </svg>
);

const SearchArt = () => (
  <svg viewBox="0 0 74 32" className="h-8 w-[74px]" aria-hidden="true">
    <path d="M4 19Q3 4 11.500 4T20 19" fill="none" stroke="#2c3442" strokeWidth="2.200" />
    <path d="M2 17q2-2.500 5-2l2.500 11q-1 3-4 2.500-4-1-4.500-5.500z" fill="#4a566c" />
    <path d="M13 26q-1-8 2-11.500 4-1 6 1.500 1 4 0 8-2 4-5.500 4.500z" fill="#333e52" />
    <path d="M25 5q4-4 8-2l5-1.500q5-1 6.500 4Q48 12 46.500 16q-3 2-6-3l-6 1.500q-2 6-5 4.500Q24 13 25 5z" fill="#b7aecb" />
    <path d="M28.500 8.500h5M31 6v5" stroke="#4e4566" strokeWidth="1.500" />
    <circle cx="41" cy="5.500" r="1.500" fill="#5b5278" /><circle cx="42" cy="9" r="1.300" fill="#5b5278" />
    <path d="m52 8 21.500 1-4.500 18.500-21-1.500z" fill="#273145" />
    <path d="m53.500 9.500 18 1L68 25.500l-18-1.500z" fill="#a9cdec" />
    <path d="M52 16q6-3 9 0t9-1l-1.500 7q-9-3-18-1z" fill="#c39c86" />
    <path d="M51 21q8-2 17.800 1.500L68 25.500l-18-1.500z" fill="#56789e" />
    <path d="m33 24 15 1.800L69 27.500 67 30.500q-10 0-34-6.500z" fill="#8892a3" />
  </svg>
);

function TaskButton({ label, active, line, children }: { label: string; active?: boolean; line?: "short" | "full"; children: ReactNode }) {
  return (
    <button aria-label={label} className={`flex w-[49px] flex-col items-center ${active ? "bg-[#3a4a53]" : ""}`}>
      <span className="flex h-[37px] items-center pt-[3px]">{children}</span>
      {line && <span className={`mt-auto h-0.5 bg-[#76b9ed] ${line === "full" ? "w-full" : "w-10"}`} />}
    </button>
  );
}

function Taskbar() {
  return (
    <footer className="flex h-10 shrink-0 bg-linear-to-r from-[#001a20] to-[#010a1c] text-white">
      <button aria-label="Start" className="flex w-12 items-center justify-center">
        <svg viewBox="0 0 16 16" className="size-4" fill="#fff" aria-hidden="true">
          <path d="M0 2.300 6.500 1.400v6.200H0zM7.400 1.200 16 0v7.600H7.400zM0 8.500h6.500v6.200L0 13.800zM7.400 8.500H16V16l-8.600-1.200z" />
        </svg>
      </button>
      <div className="flex w-72 items-center border border-[#c8c8c8] bg-[#f2f2f2] pr-0.5 pl-[11px]">
        <svg viewBox="0 0 17 17" className="size-[17px]" fill="none" stroke="#222" strokeWidth="1.300" aria-hidden="true">
          <circle cx="10.500" cy="6" r="5" />
          <path d="M7 9.700.7 16.300" />
        </svg>
        <input aria-label="Type here to search" placeholder="Type here to search" className="ml-[10px] min-w-0 flex-1 text-[14px] outline-none placeholder:text-[#333]" />
        <SearchArt />
      </div>
      <button aria-label="Task view" className="flex w-[50px] items-center justify-center">
        <svg viewBox="0 0 16 16" className="size-4" fill="none" stroke="#fff" strokeWidth="1.200" aria-hidden="true">
          <path d="M.5 0v2.500h10V0M.5 5h10v6H.5zM.5 16v-2.500h10V16M14 0v3.500M14 8v8" />
          <path d="M12.700 4h2.600v2.800h-2.600z" fill="#fff" stroke="none" />
        </svg>
      </button>
      <TaskButton label="Microsoft Edge" line="short"><EdgeLogo /></TaskButton>
      <TaskButton label="File Explorer" active line="full"><FilesLogo /></TaskButton>
      <TaskButton label="Firefox"><FirefoxLogo /></TaskButton>
      <TaskButton label="System monitor" line="short"><MonitorLogo /></TaskButton>
      <div className="ml-auto flex items-center">
        <button aria-label="Hidden icons" className="flex w-6 justify-center"><Chevron dir="up" width={1.1} className="size-3.5" /></button>
        <button aria-label="Input" className="flex w-6 justify-center">
          <svg viewBox="0 0 12 14" className="h-[14px] w-3" stroke="#dfe6ea" aria-hidden="true">
            <path d="M.5.500h11v13H.5z" fill="#1a2630" />
            <path d="M3 1v12M5 1v12M7 1v12M9 1v12M1 3h10M1 5h10M1 7h10M1 9h10M1 11h10" stroke="#a4b0b8" strokeWidth=".4" />
          </svg>
        </button>
        <button aria-label="Meet now" className="flex w-6 justify-center">
          <svg viewBox="0 0 14 16" className="h-4 w-[14px]" fill="none" stroke="#fff" aria-hidden="true">
            <rect x="2" y="4.500" width="7" height="7" rx="1.500" />
            <path d="m9 7.500 3-2v5l-3-2M2.500 2Q6.500-.8 10.500 2M2.500 14q4 2.800 8 0" />
          </svg>
        </button>
        <button aria-label="Network" className="flex w-6 justify-center">
          <svg viewBox="0 0 16 14" className="h-[14px] w-4" fill="none" stroke="#fff" aria-hidden="true">
            <path d="M5.500 2.500h10v7.500H3V5.500M9 10v3M6 13h7" />
            <path d="M.5.500h3.500V4H.5zM2.300 4v5" />
          </svg>
        </button>
        <button aria-label="Volume" className="flex w-6 justify-center">
          <svg viewBox="0 0 17 14" className="h-[14px] w-[17px]" fill="none" stroke="#fff" aria-hidden="true">
            <path d="M.5 5h2.500l3.500-3.500v11L3 9H.5z" />
            <path d="M8.500 5q1.300 2 0 4M10.700 3.300q2.600 3.700 0 7.400M13 1.500q4 5.500 0 11" />
          </svg>
        </button>
        <p className="w-16 text-center text-[11px] leading-[18px] whitespace-nowrap">11:41 PM<br />4/4/2025</p>
        <button aria-label="Notifications" className="flex w-10 justify-center">
          <svg viewBox="0 0 16 15" className="h-[15px] w-4" fill="none" stroke="#fff" strokeWidth="1.200" aria-hidden="true">
            <path d="M.6.600h14.800v11H10l-2 2.700-2-2.700H.6z" />
          </svg>
        </button>
        <span className="h-10 w-[13px] pl-2"><span className="block h-10 w-px bg-[#4a5564]" /></span>
      </div>
    </footer>
  );
}

function Watermark() {
  return (
    <div className="absolute right-12 bottom-12 flex h-16 items-center gap-1 font-['Liberation_Sans',sans-serif] text-[32px] leading-none text-white [text-shadow:0_0_3px_#aaa,0_0_2px_#bbb]">
      <span>ANY</span>
      <svg viewBox="0 0 58 64" className="h-16 w-[58px] drop-shadow-[0_0_2px_#bbb]" fill="none" stroke="#fff" strokeLinejoin="round" aria-hidden="true">
        <path d="M14 52V3l38 25" strokeWidth="3.500" />
        <path d="M5 50V8l5-2v46M12 59l42-26v-5M12 59v-6l34-21" strokeWidth="2" />
        <path d="M20 19v26l21-13z" fill="#fff" fillOpacity=".6" strokeWidth="2" />
      </svg>
      <span>RUN</span>
    </div>
  );
}

export default function App() {
  return (
    <div className="relative flex h-screen flex-col overflow-hidden bg-[#f7f7f7] font-['Open_Sans','Noto_Sans',sans-serif]">
      <BrowserChrome />
      <ChallengePage />
      <Taskbar />
      <ExplorerWindow />
      <Watermark />
    </div>
  );
}
